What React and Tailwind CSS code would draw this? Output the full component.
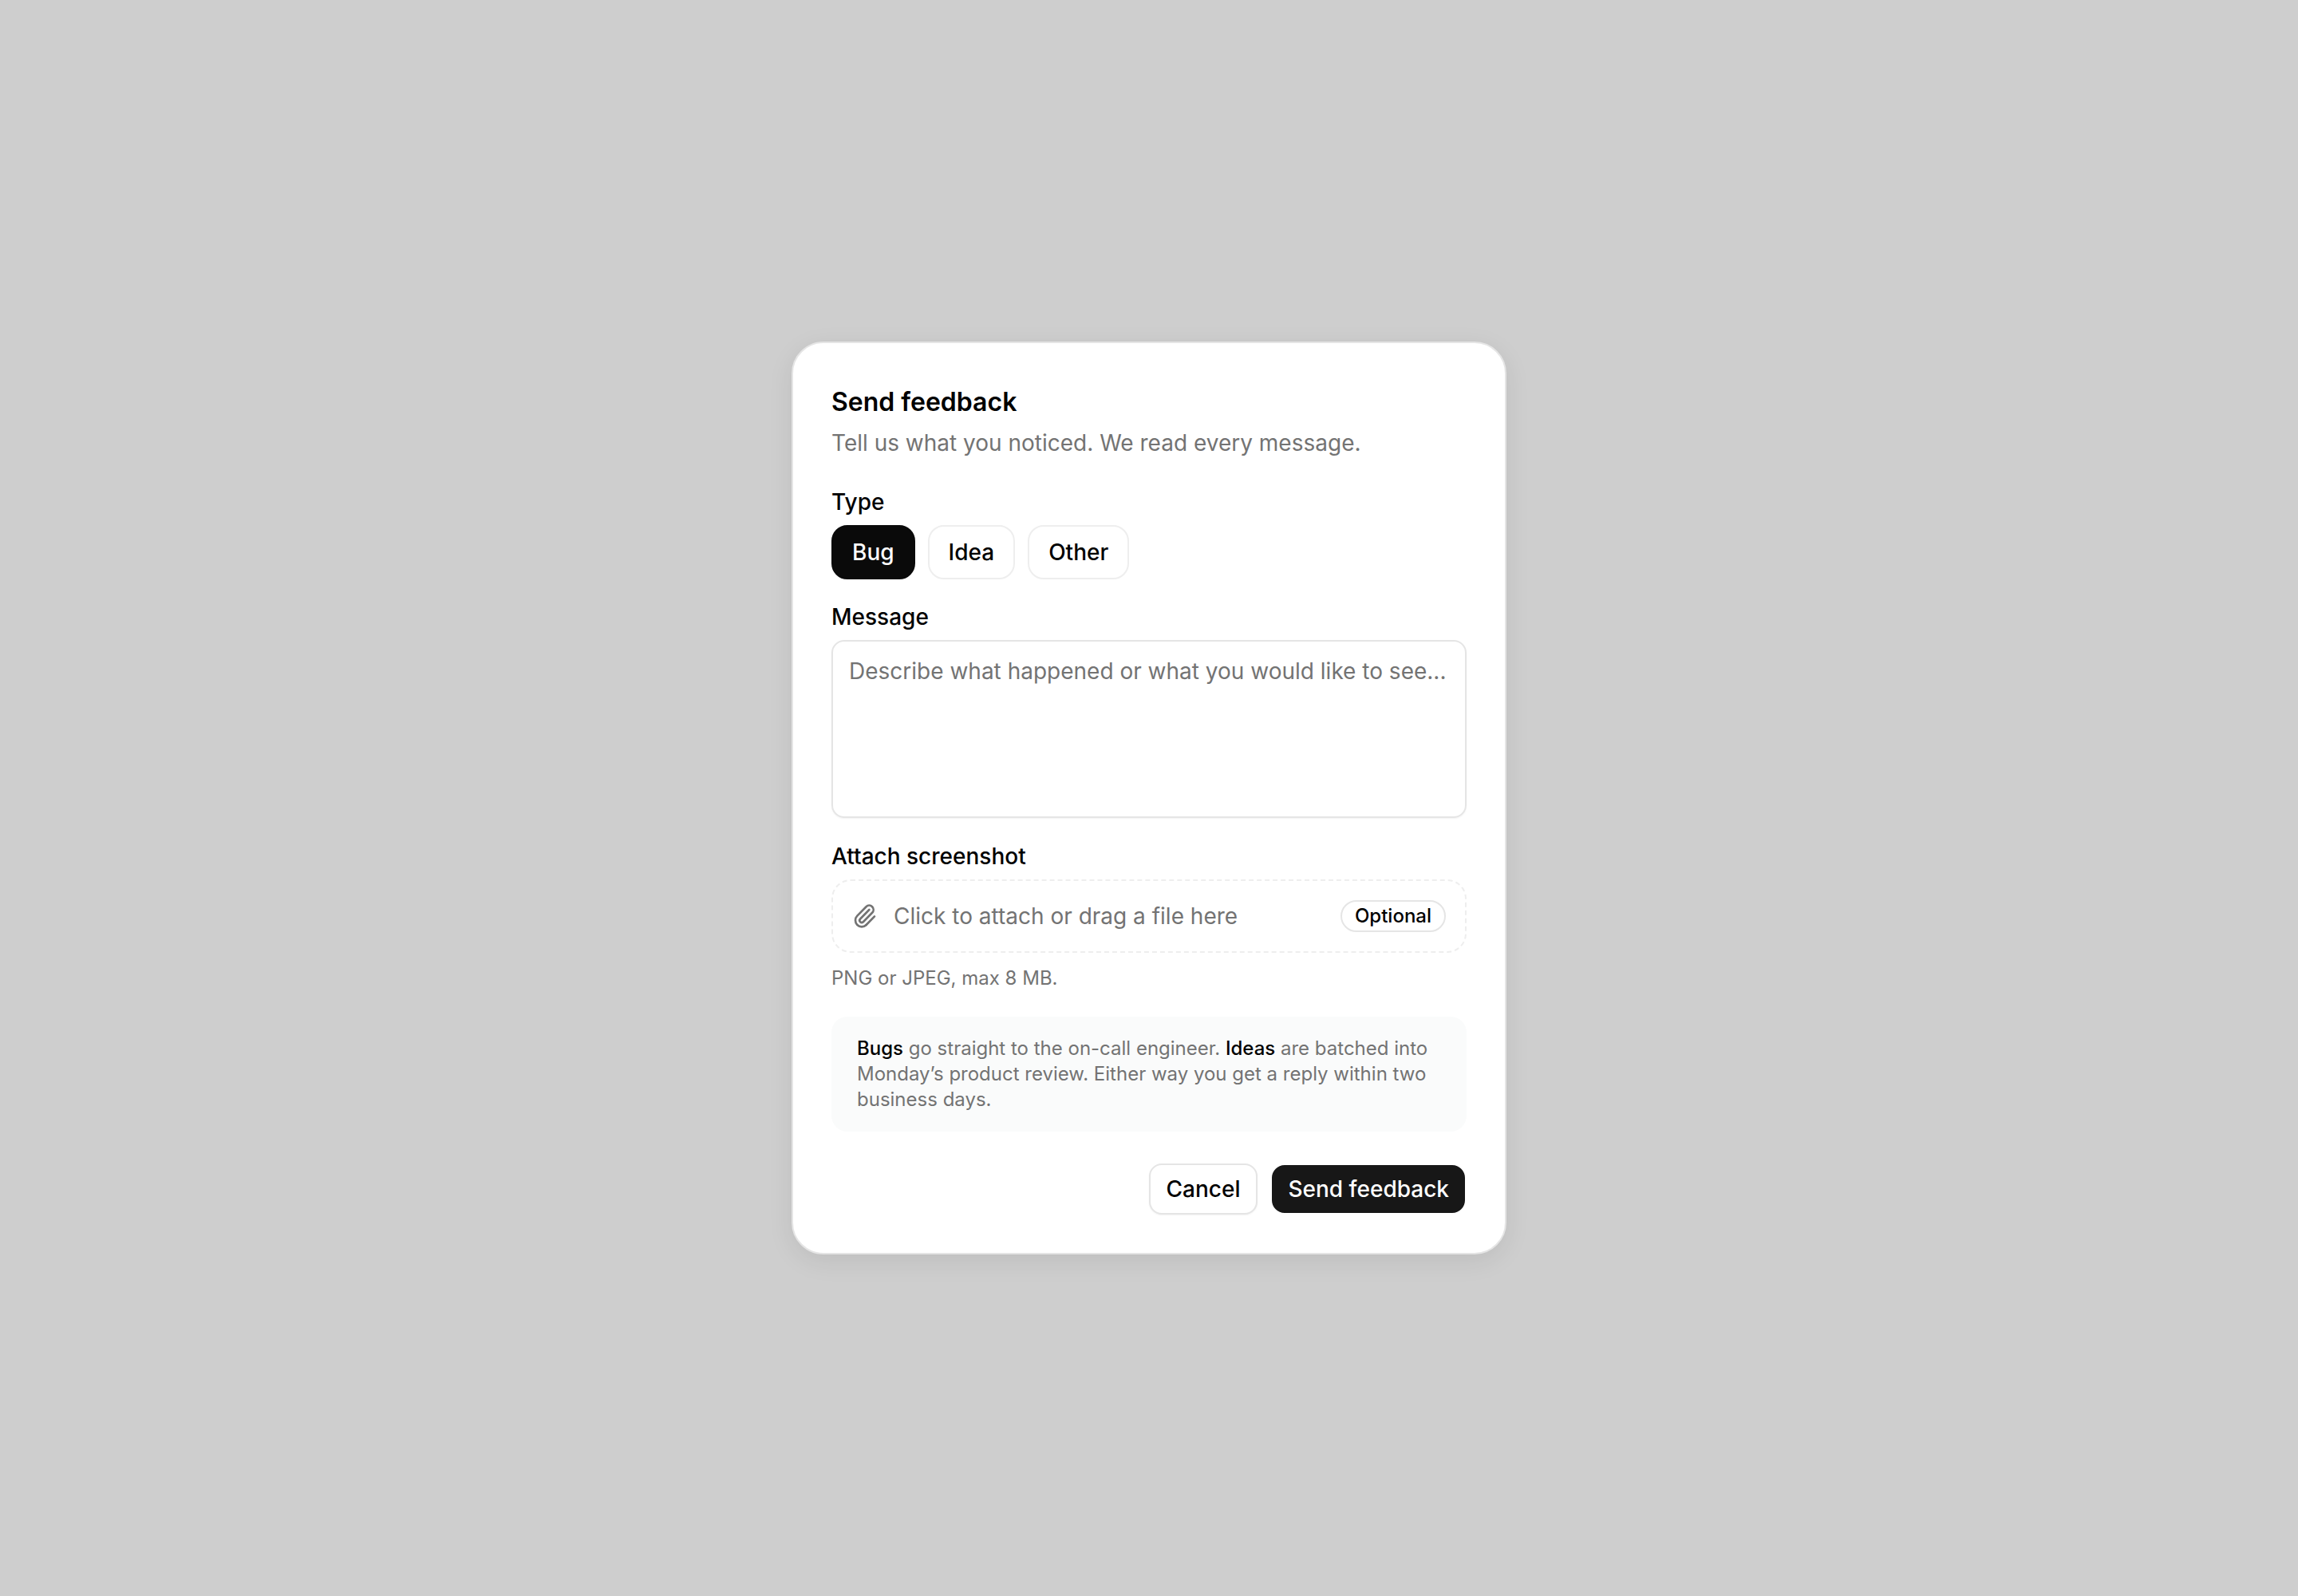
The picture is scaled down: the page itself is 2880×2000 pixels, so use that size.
const Label = ({ children }) => (
  <div className="text-[28px] leading-[42px] font-medium text-black">{children}</div>
);

const TypeButton = ({ label, active }) => (
  <button
    className={
      active
        ? "h-[68px] px-[24px] rounded-[20px] border-2 border-[#0a0a0a] bg-[#0a0a0a] text-white text-[28px] font-medium"
        : "h-[68px] px-[24px] rounded-[20px] border-2 border-[#eeeeee] bg-white text-black text-[28px] font-medium"
    }
  >
    {label}
  </button>
);

const Paperclip = () => (
  <svg width="32" height="32" viewBox="0 0 24 24" fill="none" stroke="#737373" strokeWidth="2" strokeLinecap="round" strokeLinejoin="round">
    <path d="M13.234 20.252 21 12.3" />
    <path d="m16 6-8.414 8.586a2 2 0 0 0 0 2.828 2 2 0 0 0 2.828 0l8.414-8.586a4 4 0 0 0 0-5.656 4 4 0 0 0-5.656 0l-8.415 8.585a6 6 0 1 0 8.486 8.486" />
  </svg>
);

export default function App() {
  return (
    <div className="min-h-screen flex items-center justify-center bg-[#cecece] font-['Inter',sans-serif] subpixel-antialiased">
      <div className="w-[896px] bg-white border-2 border-[#e5e5e5] rounded-[40px] p-[48px] shadow-[0_8px_32px_rgba(0,0,0,0.08)]">
        <h2 className="text-[32px] leading-[52px] font-semibold text-black">Send feedback</h2>
        <p className="mt-[4px] text-[28px] leading-[42px] text-[#737373]">Tell us what you noticed. We read every message.</p>

        <div className="mt-[32px]">
          <Label>Type</Label>
          <div className="mt-[8px] flex gap-4">
            <TypeButton label="Bug" active />
            <TypeButton label="Idea" />
            <TypeButton label="Other" />
          </div>
        </div>

        <div className="mt-[26px]">
          <Label>Message</Label>
          <div className="mt-[8px] h-[223px] rounded-[16px] border-2 border-[#e5e5e5] px-[20px] py-[16px] text-[28px] leading-[42px] text-[#737373] shadow-[0_1px_2px_rgba(0,0,0,0.05)]">
            Describe what happened or what you would like to see...
          </div>
        </div>

        <div className="mt-[27px]">
          <Label>Attach screenshot</Label>
          <div className="mt-[8px] h-[92px] rounded-[24px] border-2 border-dashed border-[#eeeeee] px-[24px] flex items-center">
            <Paperclip />
            <span className="ml-[20px] text-[28px] text-[#737373]">Click to attach or drag a file here</span>
            <span className="ml-auto h-[40px] px-[16px] rounded-full border-2 border-[#e5e5e5] text-[24px] leading-[36px] font-medium text-black">Optional</span>
          </div>
          <p className="mt-[14px] text-[24px] leading-[36px] text-[#737373]">PNG or JPEG, max 8 MB.</p>
        </div>

        <div className="mt-[30px] rounded-[20px] bg-[#fafbfb] px-[32px] py-[24px] text-[24px] leading-[32px] text-[#737373]">
          <span className="font-medium text-black">Bugs</span> go straight to the on-call engineer. <span className="font-medium text-black">Ideas</span> are batched into Monday’s product review. Either way you get a reply within two business days.
        </div>

        <div className="mt-[40px] flex justify-end gap-4">
          <button className="h-[64px] px-[20px] rounded-[16px] border-2 border-[#e5e5e5] bg-white text-[28px] font-medium text-black shadow-[0_1px_2px_rgba(0,0,0,0.05)]">Cancel</button>
          <button className="h-[64px] px-[20px] rounded-[18px] border-2 border-white bg-[#171717] text-[28px] font-medium text-white">Send feedback</button>
        </div>
      </div>
    </div>
  );
}
